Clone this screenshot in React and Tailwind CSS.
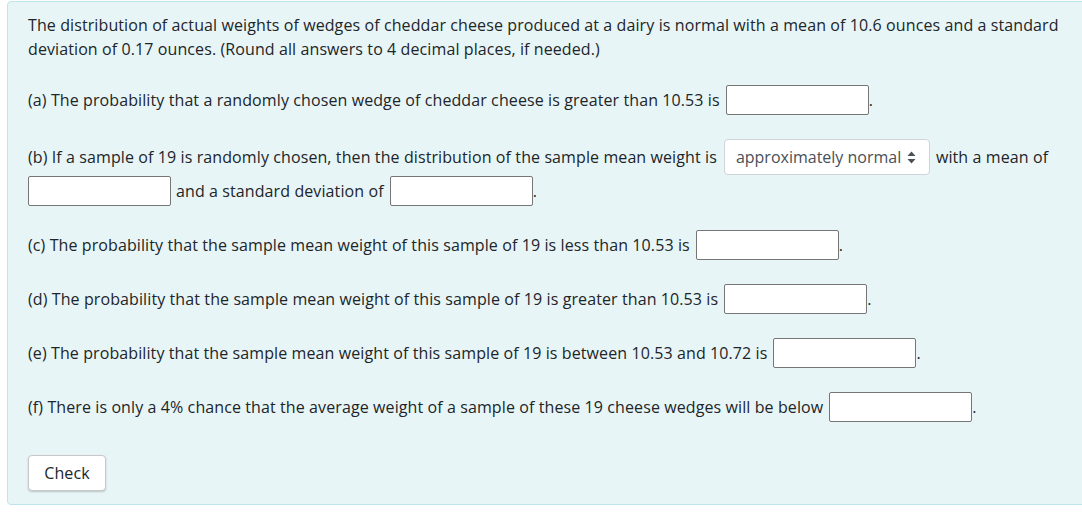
const font = { fontFamily: '"Open Sans", "Noto Sans", sans-serif' };

const Blank = () => (
  <input
    type="text"
    className="inline-block w-[143px] h-[30px] bg-white border border-[#767676] rounded-[2px] align-middle outline-none px-1"
  />
);

const Row = ({ children, className = '' }) => (
  <div className={`flex items-center h-[30px] whitespace-nowrap ${className}`}>{children}</div>
);

export default function App() {
  return (
    <div className="w-[1082px] h-[522px] bg-white overflow-hidden text-[#212529] text-[16px] tracking-[0.1px]" style={font}>
      <div className="ml-[7px] mt-px w-[1100px] h-[504px] bg-[#e8f5f7] border border-[#bee5eb] rounded-[4px] pl-5 pt-[11px]">
        <div className="leading-[24px]">
          The distribution of actual weights of wedges of cheddar cheese produced at a dairy is normal with a mean of 10.6 ounces and a standard
          <br />
          deviation of 0.17 ounces. (Round all answers to 4 decimal places, if needed.)
        </div>

        <Row className="mt-6">
          <span className="mr-[6px]">(a) The probability that a randomly chosen wedge of cheddar cheese is greater than 10.53 is</span>
          <Blank />
          <span>.</span>
        </Row>

        <div className="mt-6 flex items-center h-[36px] whitespace-nowrap">
          <span className="mr-[7px]">(b) If a sample of 19 is randomly chosen, then the distribution of the sample mean weight is</span>
          <div className="h-[36px] w-[206px] flex items-center justify-between pl-[11px] pr-[13px] bg-white border border-[#ced4da] rounded-[4px] text-[#495057] tracking-normal">
            <span>approximately normal</span>
            <svg width="9" height="13" viewBox="0 0 9 13" className="fill-[#495057] shrink-0">
              <path d="M4.5 0.5 L8.5 5 L0.5 5 Z" />
              <path d="M4.5 12.5 L8.5 8 L0.5 8 Z" />
            </svg>
          </div>
          <span className="ml-[6px]">with a mean of</span>
        </div>
        <Row className="mt-px">
          <Blank />
          <span className="ml-[5px] mr-[6px]">and a standard deviation of</span>
          <Blank />
          <span>.</span>
        </Row>

        <Row className="mt-6">
          <span className="mr-[6px]">(c) The probability that the sample mean weight of this sample of 19 is less than 10.53 is</span>
          <Blank />
          <span>.</span>
        </Row>

        <Row className="mt-6">
          <span className="mr-[6px]">(d) The probability that the sample mean weight of this sample of 19 is greater than 10.53 is</span>
          <Blank />
          <span>.</span>
        </Row>

        <Row className="mt-6">
          <span className="mr-[6px]">(e) The probability that the sample mean weight of this sample of 19 is between 10.53 and 10.72 is</span>
          <Blank />
          <span>.</span>
        </Row>

        <Row className="mt-6">
          <span className="mr-[6px]">(f) There is only a 4% chance that the average weight of a sample of these 19 cheese wedges will be below</span>
          <Blank />
          <span>.</span>
        </Row>

        <button className="mt-[33px] w-[78px] h-[36px] bg-white border border-[#c8c8c8] rounded-[4px] shadow-[0_1px_2px_rgba(0,0,0,0.2)] text-[#212529] text-[16px]">
          Check
        </button>
      </div>
    </div>
  );
}
